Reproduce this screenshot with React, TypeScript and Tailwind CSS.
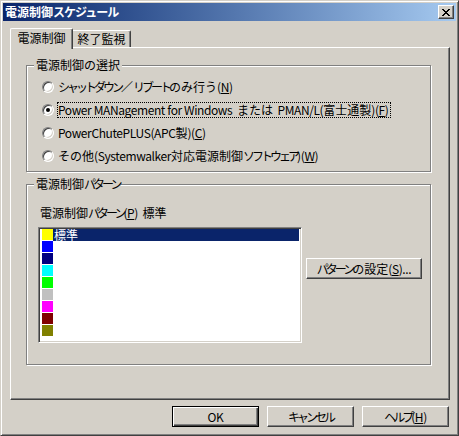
import React from "react";

const X_PATTERN = [
  "11....11",
  ".11..11.",
  "..1111..",
  "...11...",
  "..1111..",
  ".11..11.",
  "11....11",
];

function CloseGlyph() {
  const rects: React.ReactElement[] = [];
  X_PATTERN.forEach((row, y) =>
    row.split("").forEach((c, x) => {
      if (c === "1") rects.push(<rect key={`${x}-${y}`} x={x} y={y} width={1} height={1} fill="#000" />);
    })
  );
  return (
    <svg width="8" height="7" viewBox="0 0 8 7" shapeRendering="crispEdges">
      {rects}
    </svg>
  );
}

/* Text helper: narrows katakana / ascii runs to mimic the proportional UI font; "&X" underlines X */
function T({ s, kana = "tracking-[-3px]" }: { s: string; kana?: string }) {
  type Run = { cls: string; text: string };
  const runs: Run[] = [];
  const classOf = (ch: string) => {
    const c = ch.charCodeAt(0);
    if (c >= 0x30a0 && c <= 0x30ff) return "k";
    if (c >= 0x20 && c <= 0x7e) return "a";
    return "o";
  };
  for (let i = 0; i < s.length; i++) {
    let ch = s[i];
    let cls: string;
    if (ch === "&" && i + 1 < s.length) {
      ch = s[++i];
      cls = "u";
    } else {
      cls = classOf(ch);
    }
    const last = runs[runs.length - 1];
    if (last && last.cls === cls && cls !== "u") last.text += ch;
    else runs.push({ cls, text: ch });
  }
  return (
    <>
      {runs.map((r, i) => {
        if (r.cls === "k")
          return (
            <span key={i} className={kana}>
              {r.text}
            </span>
          );
        if (r.cls === "a")
          return (
            <span key={i} className="tracking-[-0.4px]">
              {r.text}
            </span>
          );
        if (r.cls === "u")
          return (
            <span key={i} className="underline underline-offset-[1px] tracking-[-0.4px]">
              {r.text}
            </span>
          );
        return <React.Fragment key={i}>{r.text}</React.Fragment>;
      })}
    </>
  );
}

function Radio({ checked }: { checked?: boolean }) {
  return (
    <span className="w-[12px] h-[12px] shrink-0 rounded-full bg-white border border-t-[#808080] border-l-[#808080] border-r-white border-b-white shadow-[inset_1px_1px_#404040,inset_-1px_-1px_#d4d0c8] flex items-center justify-center">
      {checked && <span className="w-[4px] h-[4px] rounded-full bg-black" />}
    </span>
  );
}

function RadioRow({ checked, focused, text }: { checked?: boolean; focused?: boolean; text: string }) {
  return (
    <div className="flex items-center h-[16px] gap-[3px] pl-[15px]">
      <Radio checked={checked} />
      <span
        className={`border h-[16px] leading-[14px] pr-[1px] whitespace-pre ${
          focused ? "border-dotted border-black" : "border-transparent"
        }`}
      >
        <T s={text} />
      </span>
    </div>
  );
}

function Group({ label, className, children }: { label: string; className: string; children: React.ReactNode }) {
  return (
    <div className={`relative border border-[#808080] shadow-[inset_1px_1px_#fff,1px_1px_#fff] ${className}`}>
      <span className="absolute left-[7px] top-[-9px] px-[2px] bg-[#d4d0c8] leading-[16px]">
        <T s={label} />
      </span>
      {children}
    </div>
  );
}

function Button({ text, className = "", isDefault }: { text: string; className?: string; isDefault?: boolean }) {
  return (
    <div
      className={`flex items-center justify-center bg-[#d4d0c8] border ${
        isDefault
          ? "border-black shadow-[inset_1px_1px_#fff,inset_-1px_-1px_#404040,inset_-2px_-2px_#808080]"
          : "border-t-white border-l-white border-r-[#404040] border-b-[#404040] shadow-[inset_-1px_-1px_#808080]"
      } ${className}`}
    >
      <span className="leading-[14px] whitespace-pre">
        <T s={text} />
      </span>
    </div>
  );
}

const SWATCHES = ["#ffff00", "#0000ff", "#000080", "#00ffff", "#00ff00", "#c0c0c0", "#ff00ff", "#800000", "#808000"];

export default function App() {
  return (
    <div className="w-[459px] h-[436px] bg-[#d4d0c8] border border-t-[#d4d0c8] border-l-[#d4d0c8] border-r-[#404040] border-b-[#404040] shadow-[inset_1px_1px_#fff,inset_-1px_-1px_#808080] p-[2px] flex flex-col text-[12px] text-black font-['Noto_Sans_CJK_JP',sans-serif] select-none">
      {/* Title bar */}
      <div className="h-[18px] shrink-0 flex items-center justify-between bg-linear-to-r from-[#0a246a] to-[#a6caf0] pl-[2px] pr-[2px]">
        <span className="text-white font-bold leading-[16px]">
          <T s="電源制御スケジュール" kana="tracking-[-1px]" />
        </span>
        <div className="w-[16px] h-[14px] flex items-center justify-center bg-[#d4d0c8] border border-t-white border-l-white border-r-[#404040] border-b-[#404040] shadow-[inset_-1px_-1px_#808080]">
          <CloseGlyph />
        </div>
      </div>

      {/* Tabs */}
      <div className="ml-[7px] mt-[7px] flex items-end h-[19px]">
        <div className="relative z-10 w-[63px] h-[21px] -mb-[2px] bg-[#d4d0c8] border-t border-l border-t-white border-l-white border-r border-r-[#404040] shadow-[inset_-1px_0_#808080] rounded-t-[2px] flex justify-center pt-[2px]">
          <span className="leading-[14px]">電源制御</span>
        </div>
        <div className="w-[58px] h-[17px] bg-[#d4d0c8] border-t border-t-white border-r border-r-[#404040] shadow-[inset_-1px_0_#808080] rounded-tr-[2px] flex justify-center pt-[1px]">
          <span className="leading-[14px]">終了監視</span>
        </div>
      </div>

      {/* Panel */}
      <div className="ml-[7px] w-[440px] h-[353px] shrink-0 border border-t-white border-l-white border-r-[#404040] border-b-[#404040] shadow-[inset_-1px_-1px_#808080] pl-[15px] pt-[17px] flex flex-col">
        <Group label="電源制御の選択" className="w-[405px] h-[107px] flex flex-col gap-[7px] pt-[13px]">
          <RadioRow text="シャットダウン／リブートのみ行う(&N)" />
          <RadioRow checked focused text="Power MANagement for Windows  または  PMAN/L(富士通製)(&F)" />
          <RadioRow text="PowerChutePLUS(APC製)(&C)" />
          <RadioRow text="その他(Systemwalker対応電源制御ソフトウェア)(&W)" />
        </Group>

        <Group label="電源制御パターン" className="mt-[12px] w-[405px] h-[181px] pt-[20px] pl-[11px]">
          <div className="ml-[2px] h-[16px] leading-[16px] whitespace-pre">
            <T s="電源制御パターン(&P)  標準" />
          </div>
          <div className="mt-[6px] flex items-start">
            <div className="w-[264px] h-[116px] bg-white border border-t-[#808080] border-l-[#808080] border-r-white border-b-white shadow-[inset_1px_1px_#404040,inset_-1px_-1px_#d4d0c8] p-[1px]">
              <div className="flex flex-col">
                {SWATCHES.map((c, i) => (
                  <div key={c} className="flex h-[12px] pl-[2px] pr-[1px]">
                    <div className="w-[11px] h-[11px] shrink-0" style={{ backgroundColor: c }} />
                    {i === 0 ? (
                      <div className="flex-1 h-[12px] bg-[#0a246a] text-white pl-[1px] leading-[12px]">標準</div>
                    ) : null}
                  </div>
                ))}
              </div>
            </div>
            <Button className="ml-[4px] mt-[31px] w-[116px] h-[21px]" text="パターンの設定(&S)..." />
          </div>
        </Group>
      </div>

      {/* Bottom buttons */}
      <div className="mt-[6px] ml-[169px] flex gap-[8px]">
        <Button isDefault className="w-[87px] h-[21px]" text="OK" />
        <Button className="w-[87px] h-[21px]" text="キャンセル" />
        <Button className="w-[87px] h-[21px]" text="ヘルプ(&H)" />
      </div>
    </div>
  );
}
